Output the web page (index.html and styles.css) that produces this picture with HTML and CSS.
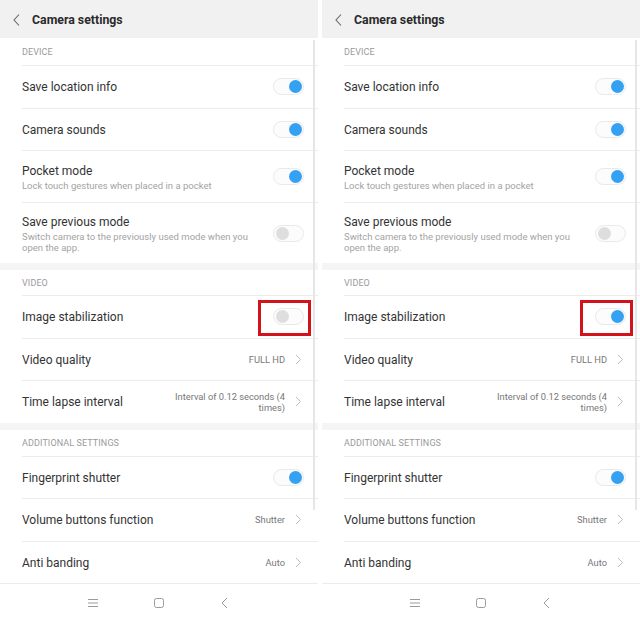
FILE: index.html
```html
<!DOCTYPE html>
<html>
<head>
<meta charset="utf-8">
<link rel="stylesheet" href="styles.css">
</head>
<body>
<div class="page">
  <div class="screen">
    <div class="header">
      <svg class="back" width="10" height="14" viewBox="0 0 10 14"><path d="M7 1.5 L2 7 L7 12.5" fill="none" stroke="#666" stroke-width="1.1"/></svg>
      <span class="title">Camera settings</span>
    </div>
    <div class="content">
      <div class="label label-first">DEVICE</div>
      <div class="row"><div class="text"><div class="name">Save location info</div></div><span class="toggle on"></span></div>
      <div class="row"><div class="text"><div class="name">Camera sounds</div></div><span class="toggle on"></span></div>
      <div class="row tall"><div class="text"><div class="name">Pocket mode</div><div class="sub">Lock touch gestures when placed in a pocket</div></div><span class="toggle on"></span></div>
      <div class="row taller"><div class="text"><div class="name">Save previous mode</div><div class="sub">Switch camera to the previously used mode when you open the app.</div></div><span class="toggle"></span></div>
      <div class="band"></div>
      <div class="label label-video">VIDEO</div>
      <div class="row"><div class="text"><div class="name">Image stabilization</div></div><span class="toggle"><span class="mark"></span></span></div>
      <div class="row"><div class="text"><div class="name">Video quality</div></div><span class="value">FULL HD</span><svg class="chev" width="7" height="11" viewBox="0 0 7 11"><path d="M1 1 L5.5 5.5 L1 10" fill="none" stroke="#bdbdbd" stroke-width="1"/></svg></div>
      <div class="row"><div class="text"><div class="name">Time lapse interval</div></div><span class="value multi">Interval of 0.12 seconds (4 times)</span><svg class="chev" width="7" height="11" viewBox="0 0 7 11"><path d="M1 1 L5.5 5.5 L1 10" fill="none" stroke="#bdbdbd" stroke-width="1"/></svg></div>
      <div class="band"></div>
      <div class="label">ADDITIONAL SETTINGS</div>
      <div class="row"><div class="text"><div class="name">Fingerprint shutter</div></div><span class="toggle on"></span></div>
      <div class="row"><div class="text"><div class="name">Volume buttons function</div></div><span class="value">Shutter</span><svg class="chev" width="7" height="11" viewBox="0 0 7 11"><path d="M1 1 L5.5 5.5 L1 10" fill="none" stroke="#bdbdbd" stroke-width="1"/></svg></div>
      <div class="row"><div class="text"><div class="name">Anti banding</div></div><span class="value">Auto</span><svg class="chev" width="7" height="11" viewBox="0 0 7 11"><path d="M1 1 L5.5 5.5 L1 10" fill="none" stroke="#bdbdbd" stroke-width="1"/></svg></div>
      <span class="scrollbar"></span>
    </div>
    <div class="nav">
      <svg width="12" height="10" viewBox="0 0 12 10"><path d="M1 1.5 H11 M1 5 H11 M1 8.5 H11" stroke="#9a9a9a" stroke-width="1"/></svg>
      <svg width="12" height="12" viewBox="0 0 12 12"><rect x="1.5" y="1.5" width="9" height="9" rx="2" fill="none" stroke="#9a9a9a" stroke-width="1"/></svg>
      <svg width="12" height="12" viewBox="0 0 12 12"><path d="M8 1 L3 6 L8 11" fill="none" stroke="#9a9a9a" stroke-width="1"/></svg>
    </div>
  </div>

  <div class="screen">
    <div class="header">
      <svg class="back" width="10" height="14" viewBox="0 0 10 14"><path d="M7 1.5 L2 7 L7 12.5" fill="none" stroke="#666" stroke-width="1.1"/></svg>
      <span class="title">Camera settings</span>
    </div>
    <div class="content">
      <div class="label label-first">DEVICE</div>
      <div class="row"><div class="text"><div class="name">Save location info</div></div><span class="toggle on"></span></div>
      <div class="row"><div class="text"><div class="name">Camera sounds</div></div><span class="toggle on"></span></div>
      <div class="row tall"><div class="text"><div class="name">Pocket mode</div><div class="sub">Lock touch gestures when placed in a pocket</div></div><span class="toggle on"></span></div>
      <div class="row taller"><div class="text"><div class="name">Save previous mode</div><div class="sub">Switch camera to the previously used mode when you open the app.</div></div><span class="toggle"></span></div>
      <div class="band"></div>
      <div class="label label-video">VIDEO</div>
      <div class="row"><div class="text"><div class="name">Image stabilization</div></div><span class="toggle on"><span class="mark"></span></span></div>
      <div class="row"><div class="text"><div class="name">Video quality</div></div><span class="value">FULL HD</span><svg class="chev" width="7" height="11" viewBox="0 0 7 11"><path d="M1 1 L5.5 5.5 L1 10" fill="none" stroke="#bdbdbd" stroke-width="1"/></svg></div>
      <div class="row"><div class="text"><div class="name">Time lapse interval</div></div><span class="value multi">Interval of 0.12 seconds (4 times)</span><svg class="chev" width="7" height="11" viewBox="0 0 7 11"><path d="M1 1 L5.5 5.5 L1 10" fill="none" stroke="#bdbdbd" stroke-width="1"/></svg></div>
      <div class="band"></div>
      <div class="label">ADDITIONAL SETTINGS</div>
      <div class="row"><div class="text"><div class="name">Fingerprint shutter</div></div><span class="toggle on"></span></div>
      <div class="row"><div class="text"><div class="name">Volume buttons function</div></div><span class="value">Shutter</span><svg class="chev" width="7" height="11" viewBox="0 0 7 11"><path d="M1 1 L5.5 5.5 L1 10" fill="none" stroke="#bdbdbd" stroke-width="1"/></svg></div>
      <div class="row"><div class="text"><div class="name">Anti banding</div></div><span class="value">Auto</span><svg class="chev" width="7" height="11" viewBox="0 0 7 11"><path d="M1 1 L5.5 5.5 L1 10" fill="none" stroke="#bdbdbd" stroke-width="1"/></svg></div>
      <span class="scrollbar"></span>
    </div>
    <div class="nav">
      <svg width="12" height="10" viewBox="0 0 12 10"><path d="M1 1.5 H11 M1 5 H11 M1 8.5 H11" stroke="#9a9a9a" stroke-width="1"/></svg>
      <svg width="12" height="12" viewBox="0 0 12 12"><rect x="1.5" y="1.5" width="9" height="9" rx="2" fill="none" stroke="#9a9a9a" stroke-width="1"/></svg>
      <svg width="12" height="12" viewBox="0 0 12 12"><path d="M8 1 L3 6 L8 11" fill="none" stroke="#9a9a9a" stroke-width="1"/></svg>
    </div>
  </div>
</div>
</body>
</html>
```
FILE: styles.css
```css
* { box-sizing: border-box; }
html, body { margin: 0; padding: 0; background: #fff; }
body { font-family: Roboto, "Noto Sans", sans-serif; color: #333; }
.page { display: flex; gap: 4px; width: 640px; height: 622px; overflow: hidden; }
.screen { width: 318px; height: 622px; display: flex; flex-direction: column; background: #fff; }
.header { height: 38px; background: #f1f1f1; display: flex; align-items: center; padding-left: 12px; padding-top: 2px; }
.back { margin-right: 10px; }
.title { font-size: 12.3px; font-weight: 700; color: #2a2a2a; }
.content { flex: 1; position: relative; display: flex; flex-direction: column; }
.label { height: 26px; padding-left: 22px; display: flex; align-items: center; font-size: 9px; color: #9a9a9a; letter-spacing: 0.1px; }
.label-first { height: 27px; }
.label-video { height: 25px; }
.row { margin-left: 22px; height: 42.5px; border-top: 1px solid #ececec; display: flex; align-items: center; padding-right: 14px; }
.row.tall { height: 52px; }
.row.taller { height: 61px; }
.text { flex: 1; min-width: 0; padding-right: 20px; padding-top: 2px; }
.name { font-size: 12px; line-height: 15px; color: #333; }
.sub { font-size: 9.5px; line-height: 11px; color: #a3a3a3; margin-top: 1px; }
.band { height: 7px; background: #f5f5f5; }
.toggle { position: relative; width: 31px; height: 17px; border: 1px solid #e9e9e9; border-radius: 9px; background: #fcfcfc; flex-shrink: 0; }
.toggle::after { content: ""; position: absolute; top: 1px; left: 2px; width: 13px; height: 13px; border-radius: 50%; background: #dedede; }
.toggle.on::after { left: auto; right: 1px; background: #35a1f2; }
.mark { position: absolute; left: -16px; top: -9px; width: 53px; height: 36px; border: 3px solid #d3131b; }
.value { font-size: 9.3px; line-height: 11px; color: #777; text-align: right; }
.value.multi { width: 118px; }
.chev { margin-left: 10px; margin-right: 2px; flex-shrink: 0; }
.scrollbar { position: absolute; right: 3px; top: 2px; width: 2px; height: 470px; background: #e6e6e6; }
.nav { height: 39px; border-top: 1px solid #ececec; display: flex; align-items: center; justify-content: center; gap: 54px; }
```
